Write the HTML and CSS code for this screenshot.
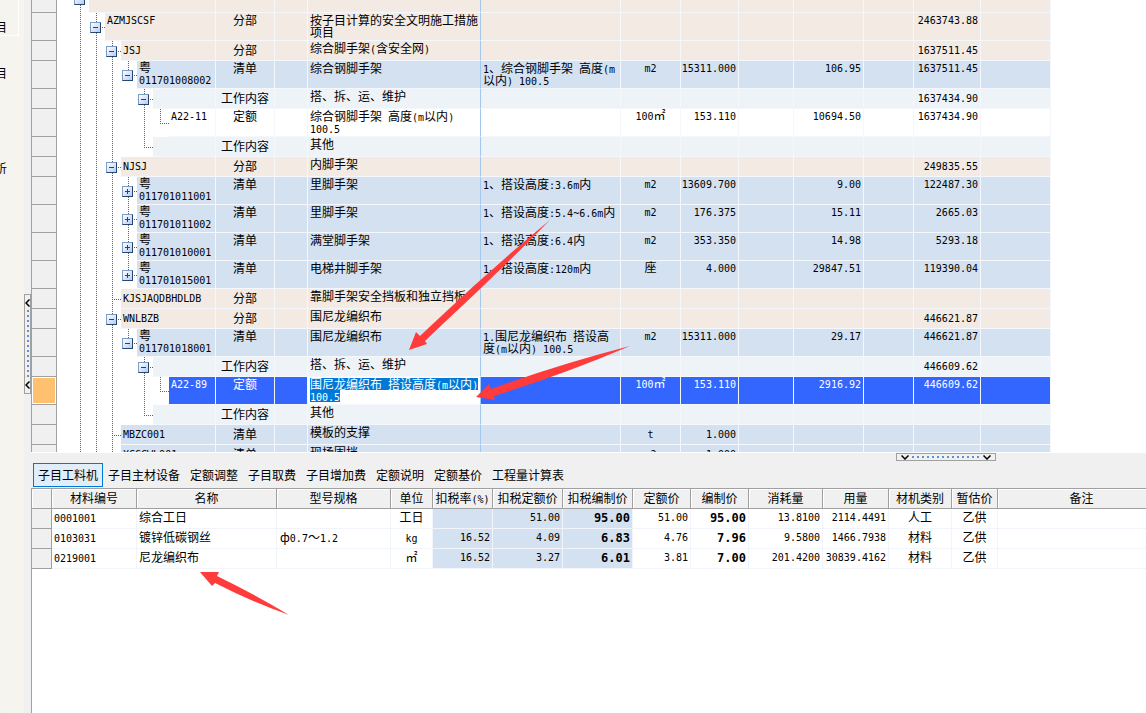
FILE: index.html
```
<!DOCTYPE html>
<html lang="zh-CN">
<head>
<meta charset="utf-8">
<title>分部分项计价</title>
<link rel="stylesheet" href="styles.css">
</head>
<body>
<aside class="side">
  <div class="side-group"><span>目</span></div>
  <span class="side-item">目</span>
  <span class="side-item last">析</span>
</aside>
<div class="vsplit">
  <button class="handle vertical" aria-label="折叠侧栏">
    <svg width="5" height="8" viewBox="0 0 5 8"><path d="M4.500 0.500L1 4L4.500 7.500"/></svg>
    <span class="dots"></span>
    <svg width="5" height="8" viewBox="0 0 5 8"><path d="M4.500 0.500L1 4L4.500 7.500"/></svg>
  </button>
</div>
<main class="main">
<section class="top">
<table class="grid budget">
<colgroup><col class="c-head"><col class="c-code"><col class="c-type"><col class="c-mark"><col class="c-name"><col class="c-feat"><col class="c-unit"><col class="c-qty"><col class="c-a"><col class="c-price"><col class="c-b"><col class="c-sum"><col class="c-c"></colgroup>
<tbody>
<tr class="part tall"><th></th><td class="tree"><div class="node"><i></i><i class="t"><button class="tg minus" aria-label="折叠"></button></i><span class="code"></span></div></td><td></td><td></td><td></td><td></td><td></td><td></td><td></td><td></td><td></td><td></td><td></td></tr>
<tr class="part tall"><th></th><td class="tree"><div class="node"><i></i><i class="v"></i><i class="t"><button class="tg minus" aria-label="折叠"></button></i><span class="code">AZMJSCSF</span></div></td><td>分部</td><td></td><td>按子目计算的安全文明施工措施<br>项目</td><td></td><td></td><td></td><td></td><td></td><td></td><td>2463743.88</td><td></td></tr>
<tr class="part"><th></th><td class="tree"><div class="node"><i></i><i class="v"></i><i class="v"></i><i class="t"><button class="tg minus" aria-label="折叠"></button></i><span class="code">JSJ</span></div></td><td>分部</td><td></td><td>综合脚手架<span class="l">(</span>含安全网<span class="l">)</span></td><td></td><td></td><td></td><td></td><td></td><td></td><td>1637511.45</td><td></td></tr>
<tr class="list tall"><th></th><td class="tree"><div class="node"><i></i><i class="v"></i><i class="v"></i><i class="v"></i><i class="e"><button class="tg minus" aria-label="折叠"></button></i><span class="code"><b>粤</b><br>011701008002</span></div></td><td>清单</td><td></td><td>综合钢脚手架</td><td><span class="l">1</span>、综合钢脚手架<span class="l"> </span>高度<span class="l">(m</span><br>以内<span class="l">) 100.5</span></td><td>m2</td><td>15311.000</td><td></td><td>106.95</td><td></td><td>1637511.45</td><td></td></tr>
<tr class="work"><th></th><td class="tree"><div class="node"><i></i><i class="v"></i><i class="v"></i><i class="v"></i><i></i><i class="t"><button class="tg minus" aria-label="折叠"></button></i><span class="code"></span></div></td><td>工作内容</td><td></td><td>搭、拆、运、维护</td><td></td><td></td><td></td><td></td><td></td><td></td><td>1637434.90</td><td></td></tr>
<tr class="quota tall"><th></th><td class="tree"><div class="node"><i></i><i class="v"></i><i class="v"></i><i class="v"></i><i></i><i class="v"></i><i class="e"></i><span class="code">A22-11</span></div></td><td>定额</td><td></td><td>综合钢脚手架<span class="l"> </span>高度<span class="l">(m</span>以内<span class="l">)</span><br><span class="l">100.5</span></td><td></td><td>100<b>㎡</b></td><td>153.110</td><td></td><td>10694.50</td><td></td><td>1637434.90</td><td></td></tr>
<tr class="work"><th></th><td class="tree"><div class="node"><i></i><i class="v"></i><i class="v"></i><i class="v"></i><i></i><i class="e"></i><span class="code"></span></div></td><td>工作内容</td><td></td><td>其他</td><td></td><td></td><td></td><td></td><td></td><td></td><td></td><td></td></tr>
<tr class="part"><th></th><td class="tree"><div class="node"><i></i><i class="v"></i><i class="v"></i><i class="t"><button class="tg minus" aria-label="折叠"></button></i><span class="code">NJSJ</span></div></td><td>分部</td><td></td><td>内脚手架</td><td></td><td></td><td></td><td></td><td></td><td></td><td>249835.55</td><td></td></tr>
<tr class="list tall"><th></th><td class="tree"><div class="node"><i></i><i class="v"></i><i class="v"></i><i class="v"></i><i class="t"><button class="tg plus" aria-label="展开"></button></i><span class="code"><b>粤</b><br>011701011001</span></div></td><td>清单</td><td></td><td>里脚手架</td><td><span class="l">1</span>、搭设高度<span class="l">:3.6m</span>内</td><td>m2</td><td>13609.700</td><td></td><td>9.00</td><td></td><td>122487.30</td><td></td></tr>
<tr class="list tall"><th></th><td class="tree"><div class="node"><i></i><i class="v"></i><i class="v"></i><i class="v"></i><i class="t"><button class="tg plus" aria-label="展开"></button></i><span class="code"><b>粤</b><br>011701011002</span></div></td><td>清单</td><td></td><td>里脚手架</td><td><span class="l">1</span>、搭设高度<span class="l">:5.4~6.6m</span>内</td><td>m2</td><td>176.375</td><td></td><td>15.11</td><td></td><td>2665.03</td><td></td></tr>
<tr class="list tall"><th></th><td class="tree"><div class="node"><i></i><i class="v"></i><i class="v"></i><i class="v"></i><i class="t"><button class="tg plus" aria-label="展开"></button></i><span class="code"><b>粤</b><br>011701010001</span></div></td><td>清单</td><td></td><td>满堂脚手架</td><td><span class="l">1</span>、搭设高度<span class="l">:6.4</span>内</td><td>m2</td><td>353.350</td><td></td><td>14.98</td><td></td><td>5293.18</td><td></td></tr>
<tr class="list tall"><th></th><td class="tree"><div class="node"><i></i><i class="v"></i><i class="v"></i><i class="v"></i><i class="e"><button class="tg plus" aria-label="展开"></button></i><span class="code"><b>粤</b><br>011701015001</span></div></td><td>清单</td><td></td><td>电梯井脚手架</td><td><span class="l">1</span>、搭设高度<span class="l">:120m</span>内</td><td><b>座</b></td><td>4.000</td><td></td><td>29847.51</td><td></td><td>119390.04</td><td></td></tr>
<tr class="part"><th></th><td class="tree"><div class="node"><i></i><i class="v"></i><i class="v"></i><i class="t"></i><span class="code">KJSJAQDBHDLDB</span></div></td><td>分部</td><td></td><td>靠脚手架安全挡板和独立挡板</td><td></td><td></td><td></td><td></td><td></td><td></td><td></td><td></td></tr>
<tr class="part"><th></th><td class="tree"><div class="node"><i></i><i class="v"></i><i class="v"></i><i class="t"><button class="tg minus" aria-label="折叠"></button></i><span class="code">WNLBZB</span></div></td><td>分部</td><td></td><td>围尼龙编织布</td><td></td><td></td><td></td><td></td><td></td><td></td><td>446621.87</td><td></td></tr>
<tr class="list tall"><th></th><td class="tree"><div class="node"><i></i><i class="v"></i><i class="v"></i><i class="v"></i><i class="e"><button class="tg minus" aria-label="折叠"></button></i><span class="code"><b>粤</b><br>011701018001</span></div></td><td>清单</td><td></td><td>围尼龙编织布</td><td><span class="l">1.</span>围尼龙编织布<span class="l"> </span>搭设高<br>度<span class="l">(m</span>以内<span class="l">) 100.5</span></td><td>m2</td><td>15311.000</td><td></td><td>29.17</td><td></td><td>446621.87</td><td></td></tr>
<tr class="work"><th></th><td class="tree"><div class="node"><i></i><i class="v"></i><i class="v"></i><i class="v"></i><i></i><i class="t"><button class="tg minus" aria-label="折叠"></button></i><span class="code"></span></div></td><td>工作内容</td><td></td><td>搭、拆、运、维护</td><td></td><td></td><td></td><td></td><td></td><td></td><td>446609.62</td><td></td></tr>
<tr class="quota tall selected"><th></th><td class="tree"><div class="node"><i></i><i class="v"></i><i class="v"></i><i class="v"></i><i></i><i class="v"></i><i class="e"></i><span class="code">A22-89</span></div></td><td>定额</td><td></td><td class="editing"><div class="editor" contenteditable="true" role="textbox" aria-label="名称"><mark>围尼龙编织布<span class="l"> </span>搭设高度<span class="l">(m</span>以内<span class="l">)</span></mark><br><mark><span class="l">100.5</span></mark></div></td><td></td><td>100<b>㎡</b></td><td>153.110</td><td></td><td>2916.92</td><td></td><td>446609.62</td><td></td></tr>
<tr class="work"><th></th><td class="tree"><div class="node"><i></i><i class="v"></i><i class="v"></i><i class="v"></i><i></i><i class="e"></i><span class="code"></span></div></td><td>工作内容</td><td></td><td>其他</td><td></td><td></td><td></td><td></td><td></td><td></td><td></td><td></td></tr>
<tr class="list"><th></th><td class="tree"><div class="node"><i></i><i class="v"></i><i class="v"></i><i class="t"></i><span class="code">MBZC001</span></div></td><td>清单</td><td></td><td>模板的支撑</td><td></td><td>t</td><td>1.000</td><td></td><td></td><td></td><td></td><td></td></tr>
<tr class="list"><th></th><td class="tree"><div class="node"><i></i><i class="v"></i><i class="v"></i><i class="t"></i><span class="code">XCGCWL001</span></div></td><td>清单</td><td></td><td>现场围挡</td><td></td><td>m2</td><td>1.000</td><td></td><td></td><td></td><td></td><td></td></tr>
</tbody>
</table>
</section>
<div class="hsplit">
  <button class="handle horizontal" aria-label="折叠下方面板">
    <svg width="8" height="5" viewBox="0 0 8 5"><path d="M0.500 0.500L4 4L7.500 0.500"/></svg>
    <span class="dots"></span>
    <svg width="8" height="5" viewBox="0 0 8 5"><path d="M0.500 0.500L4 4L7.500 0.500"/></svg>
  </button>
</div>
<nav class="tabs">
  <button class="tab active">子目工料机</button><button class="tab">子目主材设备</button><button class="tab">定额调整</button><button class="tab">子目取费</button><button class="tab">子目增加费</button><button class="tab">定额说明</button><button class="tab">定额基价</button><button class="tab">工程量计算表</button>
</nav>
<section class="bottom">
<table class="grid materials">
<colgroup><col class="m-head"><col class="m-code"><col class="m-name"><col class="m-spec"><col class="m-unit"><col class="m-rate"><col class="m-tax"><col class="m-tax"><col class="m-price"><col class="m-price"><col class="m-use"><col class="m-total"><col class="m-kind"><col class="m-est"><col></colgroup>
<thead><tr><th></th><th>材料编号</th><th>名称</th><th>型号规格</th><th>单位</th><th>扣税率<span class="l">(%)</span></th><th>扣税定额价</th><th>扣税编制价</th><th>定额价</th><th>编制价</th><th>消耗量</th><th>用量</th><th>材机类别</th><th>暂估价</th><th>备注</th></tr></thead>
<tbody>
<tr><th></th><td><span class="l">0001001</span></td><td>综合工日</td><td></td><td class="mid">工日</td><td class="num tax"></td><td class="num tax">51.00</td><td class="num tax strong">95.00</td><td class="num">51.00</td><td class="num strong">95.00</td><td class="num">13.8100</td><td class="num">2114.4491</td><td class="mid">人工</td><td class="mid">乙供</td><td></td></tr>
<tr><th></th><td><span class="l">0103031</span></td><td>镀锌低碳钢丝</td><td>ф<span class="l">0.7</span>～<span class="l">1.2</span></td><td class="mid"><span class="l">kg</span></td><td class="num tax">16.52</td><td class="num tax">4.09</td><td class="num tax strong">6.83</td><td class="num">4.76</td><td class="num strong">7.96</td><td class="num">9.5800</td><td class="num">1466.7938</td><td class="mid">材料</td><td class="mid">乙供</td><td></td></tr>
<tr><th></th><td><span class="l">0219001</span></td><td>尼龙编织布</td><td></td><td class="mid">㎡</td><td class="num tax">16.52</td><td class="num tax">3.27</td><td class="num tax strong">6.01</td><td class="num">3.81</td><td class="num strong">7.00</td><td class="num">201.4200</td><td class="num">30839.4162</td><td class="mid">材料</td><td class="mid">乙供</td><td></td></tr>
</tbody>
</table>
</section>
</main>
<svg class="marks" width="1146" height="713" viewBox="0 0 1146 713" aria-hidden="true">
  <path d="M409 350L416 332L420 336L437 320Q492 268 550 220Q498 273 446 321L425 341L427 344Z"/>
  <path d="M476 397L489 384L491 389Q560 364 630 346Q562 375 494 396L495 400Z"/>
  <path d="M200 572L219 572L217 576Q254 594 289 615Q250 601 215 583L212 586Z"/>
</svg>
</body>
</html>
```
FILE: styles.css
```
* { box-sizing: border-box; }
body {
  margin: 0;
  height: 100vh;
  display: flex;
  overflow: hidden;
  position: relative;
  background: #f0f0f0;
  color: #000;
  font: 12px/12px "Noto Sans CJK SC", sans-serif;
}
button { font: inherit; color: inherit; padding: 0; }

/* left panel */
.side {
  flex: none;
  width: 24px;
  display: flex;
  flex-direction: column;
  background: linear-gradient(90deg, #f3f3ef, #f8f5ee);
  overflow: hidden;
}
.side-group {
  width: 19px;
  height: 36px;
  padding-top: 21px;
  border: solid #fff;
  border-width: 0 1px 1px 0;
}
.side-group span, .side-item {
  display: flex;
  justify-content: flex-end;
  width: 7px;
}
.side-item { margin-top: 31px; }
.side-item.last { margin-top: 83px; }

/* splitters */
.vsplit { flex: none; width: 7px; padding-top: 294px; }
.handle {
  display: flex;
  align-items: center;
  justify-content: space-between;
  border: 1px solid #a0a0a0;
  background: #f0f0f0;
}
.handle svg { fill: none; stroke: #000; stroke-width: 1.5; }
.vertical { flex-direction: column; width: 7px; height: 100px; padding: 4px 0; }
.vertical .dots {
  width: 2px;
  height: 68px;
  background: linear-gradient(#5b92d6 40%, transparent 40%) 0 0 / 2px 5px;
}
.hsplit { flex: none; height: 10px; display: flex; padding-right: 150px; justify-content: flex-end; align-items: flex-start; }
.horizontal { width: 100px; height: 8px; padding: 0 4px; }
.horizontal .dots {
  width: 68px;
  height: 2px;
  background: linear-gradient(90deg, #5b92d6 40%, transparent 40%) 0 0 / 5px 2px;
}

.main { flex: 1; min-width: 0; display: flex; flex-direction: column; }
.top {
  flex: 0 0 453px;
  overflow: hidden;
  background: #fff;
  border-bottom: 1px solid #fff;
}

/* shared grid */
.grid { table-layout: fixed; border-collapse: separate; border-spacing: 0; }
.grid td, .grid th { padding: 0; font-weight: normal; white-space: nowrap; overflow: hidden; }
.l { font: 10px/0 "DejaVu Sans Mono", monospace; white-space: pre; }

/* budget tree */
.budget { width: 1020px; margin-top: -15px; }
.c-head { width: 26px; }
.c-code { width: 159px; }
.c-type { width: 59px; }
.c-mark { width: 33px; }
.c-name { width: 173px; }
.c-feat { width: 140px; }
.c-unit { width: 60px; }
.c-qty { width: 58px; }
.c-a { width: 55px; }
.c-price { width: 70px; }
.c-b { width: 50px; }
.c-sum { width: 67px; }
.c-c { width: 70px; }

.budget tr { height: 20px; background: var(--fill); }
.budget tr.tall { height: 28px; }
.budget th {
  background: #f0f0f0;
  border: solid #a0a0a0;
  border-width: 0 1px 1px;
}
.budget td {
  vertical-align: top;
  padding-top: 3px;
  border: solid #f4f8fd;
  border-width: 0 1px 1px 0;
}
.budget .tall td { padding-top: 1px; }
.budget td:nth-child(3) { text-align: center; }
.budget td:nth-child(5) { padding: 1px 0 0 2px; border-right-color: #a3c8ef; }
.budget td:nth-child(6) { padding-left: 2px; }
.budget td:nth-child(n+7) { font: 10px/12px "DejaVu Sans Mono", "Noto Sans CJK SC", monospace; text-align: right; padding: 4px 2px 0 0; }
.budget .tall td:nth-child(n+7) { padding-top: 2px; }
.budget tr td:nth-child(7) { text-align: center; padding-right: 0; }
.budget b { font: 12px/0 "Noto Sans CJK SC", sans-serif; }
.part { --fill: #f2eae3; }
.list { --fill: #d3e1f1; }
.work { --fill: #eef3f8; }
.quota { --fill: #fff; }
.selected { --fill: #3366ff; color: #fff; }
.budget .selected th { background: #ffc070; box-shadow: inset 0 0 0 1px #fff; }

.budget td.tree, .budget .tall td.tree { padding: 0; background: #fff; border-bottom: 0; }
.node { display: flex; height: 20px; }
.tall .node { height: 28px; }
.node i { flex: none; position: relative; width: 16px; display: flex; align-items: center; padding-left: 1px; }
.v::before, .t::before, .e::before {
  content: "";
  position: absolute;
  left: 7px;
  top: 0;
  width: 1px;
  height: 100%;
  background: linear-gradient(#606060 50%, transparent 50%) 0 0 / 1px 2px;
}
.e::before { height: 50%; }
.t::after, .e::after {
  content: "";
  position: absolute;
  left: 7px;
  right: 0;
  top: 50%;
  height: 1px;
  background: linear-gradient(90deg, #606060 50%, transparent 50%) 0 0 / 2px 1px;
}
.code {
  flex: 1;
  padding: 4px 0 0 2px;
  background: var(--fill);
  border-bottom: 1px solid #f4f8fd;
  font: 10px/12px "DejaVu Sans Mono", monospace;
}
.tall .code { padding-top: 2px; }
.tg {
  position: relative;
  z-index: 1;
  width: 11px;
  height: 11px;
  border: 1px solid;
  border-color: #7d9cc8 #24466f #24466f #7d9cc8;
  background:
    linear-gradient(#24466f, #24466f) 50% 50% / 5px 1px no-repeat,
    linear-gradient(135deg, #fff, #b4cbf2);
}
.tg.plus {
  background:
    linear-gradient(#24466f, #24466f) 50% 50% / 5px 1px no-repeat,
    linear-gradient(#24466f, #24466f) 50% 50% / 1px 5px no-repeat,
    linear-gradient(135deg, #fff, #b4cbf2);
}
.budget td.editing { padding: 0; }
.editor { height: 27px; padding: 1px 0 0 2px; background: #fff; color: #000; outline: 0; }
.editor mark { display: inline-block; vertical-align: top; height: 12px; background: #0078d7; color: #fff; }

/* tabs */
.tabs { flex: none; display: flex; height: 25px; padding-left: 2px; }
.tab { height: 24px; padding: 0 4px; border: 1px solid transparent; background: none; white-space: nowrap; }
.tab.active { border-color: #0078d7; background: #e1edf8; }

/* materials: the remarks column runs on past the pane's edge */
.bottom { flex: 1; min-height: 0; overflow: hidden; background: #fff; border: solid #a0a0a0; border-width: 1px 0 0 1px; }
.materials { width: calc(100% + 20px); }
.m-head { width: 20px; }
.m-code { width: 85px; }
.m-name { width: 140px; }
.m-spec { width: 114px; }
.m-unit { width: 42px; }
.m-rate { width: 60px; }
.m-tax { width: 70px; }
.m-price { width: 58px; }
.m-use { width: 74px; }
.m-total { width: 66px; }
.m-kind { width: 63px; }
.m-est { width: 46px; }
.materials tr { height: 20px; }
.materials th { background: #f0f0f0; border: solid #a0a0a0; border-width: 0 1px 1px 0; text-align: center; padding-bottom: 2px; }
.materials thead th { box-shadow: inset 1px 1px 0 #fff; }
.materials td { padding: 0 2px 3px; border: solid #f1f5fb; border-width: 0 1px 1px 0; }
.materials td:nth-child(4) { padding-left: 3px; }
.materials .mid { text-align: center; }
.materials .num { text-align: right; padding-bottom: 1px; font: 10px/12px "DejaVu Sans Mono", monospace; }
.materials .tax { background: #d3e1f1; }
.materials .strong { font-weight: bold; font-size: 12px; }

.marks { position: absolute; left: 0; top: 0; fill: #ff3b3b; pointer-events: none; }
```
